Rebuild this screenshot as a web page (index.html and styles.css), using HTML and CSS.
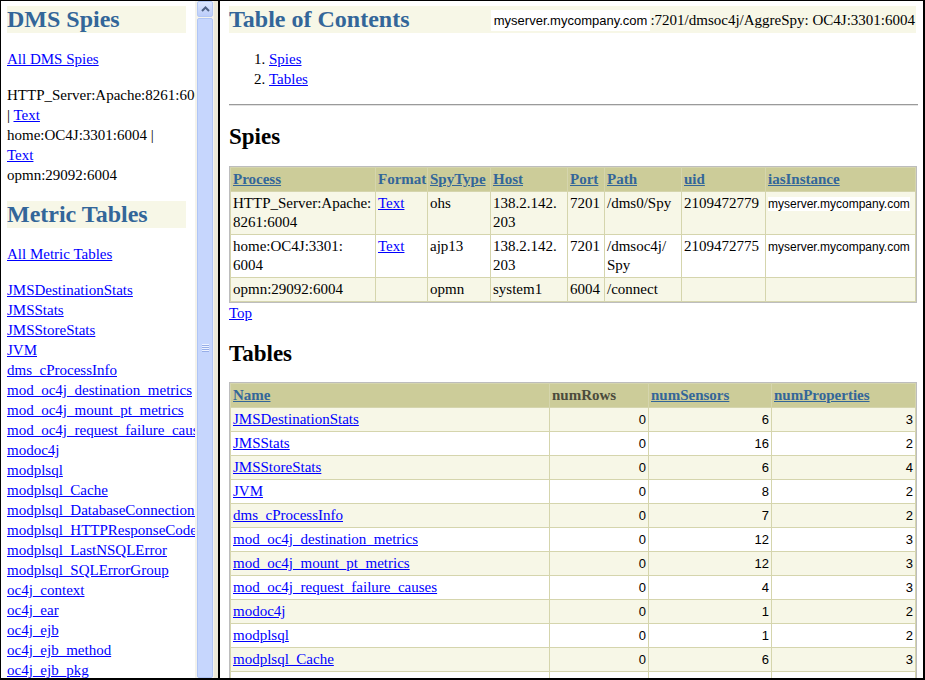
FILE: index.html
```html
<!DOCTYPE html>
<html>
<head>
<meta charset="utf-8">
<title>DMS Metric Tables</title>
<link rel="stylesheet" href="styles.css">
</head>
<body>
<div class="screen">
  <div class="left-frame">
    <div class="left-body">
      <h1 class="nav-title">DMS Spies</h1>
      <p class="nav-all"><a href="#">All DMS Spies</a></p>
      <div class="nav-lines">
        <div>HTTP_Server:Apache:8261:6004</div>
        <div>| <a href="#">Text</a></div>
        <div>home:OC4J:3301:6004 |</div>
        <div><a href="#">Text</a></div>
        <div>opmn:29092:6004</div>
      </div>
      <h1 class="nav-title nav-title-next">Metric Tables</h1>
      <p class="nav-all"><a href="#">All Metric Tables</a></p>
      <ul class="nav-list">
        <li><a href="#">JMSDestinationStats</a></li>
        <li><a href="#">JMSStats</a></li>
        <li><a href="#">JMSStoreStats</a></li>
        <li><a href="#">JVM</a></li>
        <li><a href="#">dms_cProcessInfo</a></li>
        <li><a href="#">mod_oc4j_destination_metrics</a></li>
        <li><a href="#">mod_oc4j_mount_pt_metrics</a></li>
        <li><a href="#">mod_oc4j_request_failure_causes</a></li>
        <li><a href="#">modoc4j</a></li>
        <li><a href="#">modplsql</a></li>
        <li><a href="#">modplsql_Cache</a></li>
        <li><a href="#">modplsql_DatabaseConnectionPool</a></li>
        <li><a href="#">modplsql_HTTPResponseCodes</a></li>
        <li><a href="#">modplsql_LastNSQLError</a></li>
        <li><a href="#">modplsql_SQLErrorGroup</a></li>
        <li><a href="#">oc4j_context</a></li>
        <li><a href="#">oc4j_ear</a></li>
        <li><a href="#">oc4j_ejb</a></li>
        <li><a href="#">oc4j_ejb_method</a></li>
        <li><a href="#">oc4j_ejb_pkg</a></li>
        <li><a href="#">oc4j_ejb_stateful_bean</a></li>
      </ul>
    </div>
    <div class="scrollbar">
      <div class="sb-up">
        <svg width="9" height="6" viewBox="0 0 9 6"><path d="M1 5 L4.5 1.5 L8 5" fill="none" stroke="#4d6185" stroke-width="2"/></svg>
      </div>
      <div class="sb-thumb"><div class="sb-grip"></div></div>
    </div>
  </div>
  <div class="divider"></div>
  <div class="main">
    <div class="toc-head">
      <h1 class="page-title">Table of Contents</h1>
      <div class="spy-ref"><span class="host">myserver.mycompany.com</span>:7201/dmsoc4j/AggreSpy: OC4J:3301:6004</div>
    </div>
    <ol class="toc">
      <li><a href="#">Spies</a></li>
      <li><a href="#">Tables</a></li>
    </ol>
    <hr class="rule">
    <h2 class="section">Spies</h2>
    <table class="grid spies">
      <tr>
        <th class="c-process"><a href="#">Process</a></th>
        <th class="c-format">Format</th>
        <th class="c-spytype"><a href="#">SpyType</a></th>
        <th class="c-host"><a href="#">Host</a></th>
        <th class="c-port"><a href="#">Port</a></th>
        <th class="c-path"><a href="#">Path</a></th>
        <th class="c-uid"><a href="#">uid</a></th>
        <th class="c-ias"><a href="#">iasInstance</a></th>
      </tr>
      <tr class="odd">
        <td>HTTP_Server:Apache:<br>8261:6004</td>
        <td><a href="#">Text</a></td>
        <td>ohs</td>
        <td>138.2.142.<br>203</td>
        <td>7201</td>
        <td>/dms0/Spy</td>
        <td>2109472779</td>
        <td><span class="host-cell">myserver.mycompany.com</span></td>
      </tr>
      <tr class="even">
        <td>home:OC4J:3301:<br>6004</td>
        <td><a href="#">Text</a></td>
        <td>ajp13</td>
        <td>138.2.142.<br>203</td>
        <td>7201</td>
        <td>/dmsoc4j/<br>Spy</td>
        <td>2109472775</td>
        <td><span class="host-cell">myserver.mycompany.com</span></td>
      </tr>
      <tr class="odd">
        <td>opmn:29092:6004</td>
        <td></td>
        <td>opmn</td>
        <td>system1</td>
        <td>6004</td>
        <td>/connect</td>
        <td></td>
        <td></td>
      </tr>
    </table>
    <p class="top"><a href="#">Top</a></p>
    <h2 class="section">Tables</h2>
    <table class="grid tables">
      <tr>
        <th class="c-name"><a href="#">Name</a></th>
        <th class="c-rows plain">numRows</th>
        <th class="c-sensors"><a href="#">numSensors</a></th>
        <th class="c-props"><a href="#">numProperties</a></th>
      </tr>
      <tr class="odd"><td><a href="#">JMSDestinationStats</a></td><td class="num">0</td><td class="num">6</td><td class="num">3</td></tr>
      <tr class="even"><td><a href="#">JMSStats</a></td><td class="num">0</td><td class="num">16</td><td class="num">2</td></tr>
      <tr class="odd"><td><a href="#">JMSStoreStats</a></td><td class="num">0</td><td class="num">6</td><td class="num">4</td></tr>
      <tr class="even"><td><a href="#">JVM</a></td><td class="num">0</td><td class="num">8</td><td class="num">2</td></tr>
      <tr class="odd"><td><a href="#">dms_cProcessInfo</a></td><td class="num">0</td><td class="num">7</td><td class="num">2</td></tr>
      <tr class="even"><td><a href="#">mod_oc4j_destination_metrics</a></td><td class="num">0</td><td class="num">12</td><td class="num">3</td></tr>
      <tr class="odd"><td><a href="#">mod_oc4j_mount_pt_metrics</a></td><td class="num">0</td><td class="num">12</td><td class="num">3</td></tr>
      <tr class="even"><td><a href="#">mod_oc4j_request_failure_causes</a></td><td class="num">0</td><td class="num">4</td><td class="num">3</td></tr>
      <tr class="odd"><td><a href="#">modoc4j</a></td><td class="num">0</td><td class="num">1</td><td class="num">2</td></tr>
      <tr class="even"><td><a href="#">modplsql</a></td><td class="num">0</td><td class="num">1</td><td class="num">2</td></tr>
      <tr class="odd"><td><a href="#">modplsql_Cache</a></td><td class="num">0</td><td class="num">6</td><td class="num">3</td></tr>
      <tr class="even"><td><a href="#">modplsql_DatabaseConnectionPool</a></td><td class="num">0</td><td class="num">5</td><td class="num">3</td></tr>
      <tr class="odd"><td><a href="#">modplsql_HTTPResponseCodes</a></td><td class="num">0</td><td class="num">3</td><td class="num">2</td></tr>
    </table>
  </div>
</div>
</body>
</html>
```
FILE: styles.css
```css
html, body {
  margin: 0;
  padding: 0;
  background: #fff;
}
body {
  font-family: "Liberation Serif", "Times New Roman", serif;
  font-size: 15px;
  line-height: 20px;
  color: #000;
}
a {
  color: #0000ff;
  text-decoration: underline;
}
.screen {
  width: 925px;
  height: 680px;
  box-sizing: border-box;
  border: 1px solid #000;
  border-right-width: 2px;
  border-bottom-width: 2px;
  display: flex;
  overflow: hidden;
  background: #fff;
}

/* left frame */
.left-frame {
  width: 213px;
  flex: none;
  display: flex;
}
.left-body {
  width: 194px;
  flex: none;
  padding-left: 6px;
  box-sizing: border-box;
  overflow: hidden;
  white-space: nowrap;
}
.nav-title {
  margin: 5px 0 0;
  width: 179px;
  height: 27px;
  line-height: 27px;
  font-size: 24px;
  font-weight: bold;
  color: #336699;
  background: #f7f7e7;
}
.nav-title-next {
  margin-top: 16px;
}
.nav-all {
  margin: 16px 0 0;
}
.nav-lines {
  margin-top: 16px;
}
.nav-list {
  list-style: none;
  margin: 16px 0 0;
  padding: 0;
}

/* scrollbar */
.scrollbar {
  width: 19px;
  flex: none;
  display: flex;
  flex-direction: column;
  background: #f3f2ec;
  padding: 0 1px 0 2px;
  box-sizing: border-box;
}
.sb-up {
  height: 16px;
  box-sizing: border-box;
  border: 1px solid #b4c8f4;
  border-radius: 2px;
  background: linear-gradient(#dbe6fe, #bccdf9);
  display: flex;
  align-items: center;
  justify-content: center;
}
.sb-thumb {
  flex: 1;
  margin-top: 1px;
  border: 1px solid #b0c5f5;
  border-radius: 2px;
  background: #c6d6fd;
  display: flex;
  align-items: center;
  justify-content: center;
}
.sb-grip {
  width: 7px;
  height: 8px;
  background: repeating-linear-gradient(#eef3ff 0 1px, #97aee8 1px 2px);
}

.divider {
  width: 6px;
  flex: none;
  background: #ece9d8;
  border-right: 2px solid #000;
  box-sizing: border-box;
}

/* main frame */
.main {
  flex: 1;
  min-width: 0;
  padding: 0 5px 0 9px;
  overflow: hidden;
}
.toc-head {
  margin: 5px 2px 0 0;
  height: 27px;
  display: flex;
  justify-content: space-between;
  align-items: center;
  background: #f7f7e7;
}
.page-title {
  margin: 0;
  font-size: 24px;
  line-height: 27px;
  font-weight: bold;
  color: #336699;
  white-space: nowrap;
}
.spy-ref {
  padding-right: 1px;
  white-space: nowrap;
}
.host {
  font-family: "Liberation Sans", Arial, sans-serif;
  font-size: 13px;
  line-height: 14px;
  background: #fff;
  padding: 3px 3px;
}
.toc {
  margin: 16px 0 0;
  padding-left: 40px;
}
.rule {
  margin: 15px 0 0;
  height: 0;
  border: 0;
  border-top: 1px solid #9a9a9a;
  border-bottom: 1px solid #e2e2e2;
}
.section {
  margin: 17px 0 0;
  font-size: 23px;
  line-height: 27px;
  font-weight: bold;
}
.grid {
  width: 688px;
  table-layout: fixed;
  border: 1px solid #bdbdbd;
  border-spacing: 1px;
  background: #d5d5ad;
}
.spies {
  margin-top: 16px;
}
.tables {
  margin-top: 15px;
}
.grid th,
.grid td {
  box-sizing: border-box;
  padding: 2px 2px;
  line-height: 19px;
  vertical-align: top;
  text-align: left;
  white-space: nowrap;
  overflow: hidden;
}
.grid th {
  background: #cccc99;
  font-size: 15px;
  font-weight: bold;
  color: #336699;
  padding: 2px 1px 2px 2px;
  overflow: visible;
}
.grid th a {
  color: #336699;
}
.grid th.plain {
  color: #4b4b3c;
}
.grid tr.odd td {
  background: #f7f7e7;
}
.grid tr.even td {
  background: #fff;
}
.grid td.num {
  text-align: right;
  font-family: "Liberation Sans", Arial, sans-serif;
  font-size: 13px;
}
.host-cell {
  font-family: "Liberation Sans", Arial, sans-serif;
  font-size: 12px;
  line-height: 14px;
  background: #fff;
}
.c-process { width: 144px; }
.c-format { width: 51px; }
.c-spytype { width: 62px; }
.c-host { width: 76px; }
.c-port { width: 36px; }
.c-path { width: 76px; }
.c-uid { width: 83px; }
.c-ias { width: 149px; }
.c-name { width: 318px; }
.c-rows { width: 98px; }
.c-sensors { width: 122px; }
.c-props { width: 143px; }
.top {
  margin: 0;
}
```
